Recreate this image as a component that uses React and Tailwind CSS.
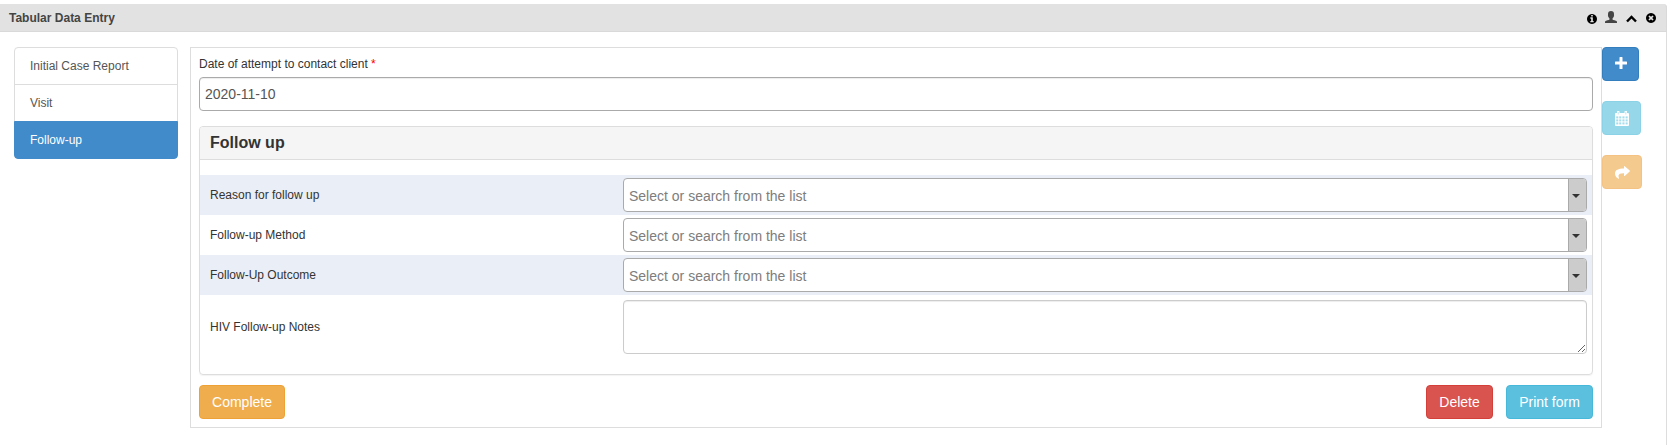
import React from "react";

const disc =
  "q0 209-103 385.5t-279.5 279.5-385.5 103-385.5-103-279.5-279.5-103-385.5 103-385.5 279.5-279.5 385.5-103 385.5 103 279.5 279.5 103 385.5z";

function InfoIcon() {
  return (
    <svg viewBox="128 128 1536 1536" className="w-[10px] h-[10px]">
      <path
        fill="#000"
        d={
          "M1152 1376v-160q0-14-9-23t-23-9h-96v-512q0-14-9-23t-23-9h-320q-14 0-23 9t-9 23v160q0 14 9 23t23 9h96v320h-96q-14 0-23 9t-9 23v160q0 14 9 23t23 9h448q14 0 23-9t9-23zm-128-896v-160q0-14-9-23t-23-9h-192q-14 0-23 9t-9 23v160q0 14 9 23t23 9h192q14 0 23-9t9-23zm640 416" +
          disc
        }
      />
    </svg>
  );
}

function UserIcon() {
  return (
    <svg viewBox="0 0 12 12" className="w-3 h-3">
      <path
        fill="#444"
        d="M6 0C4 0 3 1.200 3 3c0 .5 0 .8.100 1.200-.3.300-.2 1.100.300 1.500.2.700.6 1.200 1.100 1.700v1C4.200 9 .8 9.200.200 10.200 0 10.700 0 11.300 0 12h12c0-.7 0-1.300-.2-1.800-.6-1-4-1.200-4.300-1.800v-1c.5-.5.9-1 1.100-1.700.5-.4.6-1.200.3-1.500C9 3.800 9 3.500 9 3 9 1.200 8 0 6 0z"
      />
    </svg>
  );
}

function ChevronUpIcon() {
  return (
    <svg viewBox="0 0 11 8" className="w-[11px] h-2">
      <path fill="none" stroke="#000" strokeWidth="2.400" d="M1 6.500L5.500 2L10 6.500" />
    </svg>
  );
}

function CloseIcon() {
  return (
    <svg viewBox="128 128 1536 1536" className="w-[10px] h-[10px]">
      <path
        fill="#000"
        d={
          "M1277 1122q0-26-19-45l-181-181 181-181q19-19 19-45 0-27-19-46l-90-90q-19-19-46-19-26 0-45 19l-181 181-181-181q-19-19-45-19-27 0-46 19l-90 90q-19 19-19 46 0 26 19 45l181 181-181 181q-19 19-19 45 0 27 19 46l90 90q19 19 46 19 26 0 45-19l181-181 181 181q19 19 45 19 27 0 46-19l90-90q19-19 19-46zm387-226" +
          disc
        }
      />
    </svg>
  );
}

function PlusIcon() {
  return (
    <svg viewBox="0 0 12 12" className="w-3 h-3">
      <path
        fill="#fff"
        d="M5 0h2q.5 0 .5.500v4h4q.5 0 .5.500v2q0 .5-.5.500h-4v4q0 .5-.5.500H5q-.5 0-.5-.5v-4h-4Q0 7.500 0 7V5q0-.5.500-.5h4v-4Q4.500 0 5 0z"
      />
    </svg>
  );
}

function CalendarIcon() {
  const columns = [1.2, 4.2, 7.4, 10.6];
  const rows = [5.4, 8.4, 11.4];
  return (
    <svg viewBox="0 0 14 15" className="w-[14px] h-[15px]">
      <path
        fill="#fff"
        d="M2 .5q0-.5.500-.5h1.500q.5 0 .5.500V2h5V.500q0-.5.500-.5h1.500q.5 0 .5.500V2h1q1 0 1 1v11q0 1-1 1H1q-1 0-1-1V3q0-1 1-1h1z"
      />
      {rows.map((y) =>
        columns.map((x) => (
          <rect key={`${x}-${y}`} x={x} y={y} width="2.100" height="2" fill="#96d7ea" opacity="0.850" />
        ))
      )}
      <path stroke="#96d7ea" strokeWidth="0.600" d="M3.200 1v2.500M10.800 1v2.500" />
    </svg>
  );
}

function ShareIcon() {
  return (
    <svg viewBox="0 0 15 13" className="w-[15px] h-[13px]">
      <path
        fill="#fff"
        d="M9 .4Q9-.3 9.700.200L14.700 4.500Q15.100 5 14.700 5.500L9.700 9.900Q9 10.400 9 9.700V7.300C5.500 7.200 3.700 8 3.500 9.800c0 .8.200 1.600.5 2.300.2.700-.4.800-.8.400C1.300 11.500 0 9.700 0 7.700 0 4 3.400 2.600 9 2.600z"
      />
    </svg>
  );
}

function TabItem({ label, className }) {
  return <a className={`block h-[38px] border px-[15px] pt-[10px] leading-4 ${className}`}>{label}</a>;
}

function SelectBox() {
  return (
    <div className="flex h-[34px] w-[964px] overflow-hidden rounded border border-[#aaa] bg-white text-sm text-[#7d7d7d]">
      <span className="flex-1 pl-[5px] pt-[7px] leading-5">Select or search from the list</span>
      <span className="flex w-[18px] items-center justify-center border-l border-[#aaa] bg-[#ccc] pr-[3px] pt-px">
        <svg viewBox="0 0 8 4" className="h-1 w-2 shrink-0">
          <path d="M0 0h8L4 4z" fill="#333" />
        </svg>
      </span>
    </div>
  );
}

function FieldRow({ label, shaded }) {
  return (
    <div className={`flex h-10 items-center justify-between pl-[10px] pr-[5px] ${shaded ? "bg-[#eaeef6]" : "bg-white"}`}>
      <span className="leading-4">{label}</span>
      <SelectBox />
    </div>
  );
}

const button = "flex h-[34px] items-center justify-center rounded border text-sm leading-5 text-white";

export default function App() {
  return (
    <div className="h-[445px] overflow-hidden bg-white pt-1 font-['Liberation_Sans',Arial,sans-serif] text-xs text-[#333]">
      <div className="flex h-[441px] w-[1667px] flex-col rounded-tr border-r border-[#ddd]">
        <header className="-mr-px flex h-7 shrink-0 items-center justify-between rounded-tr border-b border-r border-[#d9d9d9] bg-[#e2e2e2] pl-[9px] pr-[10px]">
          <h1 className="font-bold leading-4 text-[#444]">Tabular Data Entry</h1>
          <div className="flex items-center">
            <span className="mr-[8px] mt-[2px]"><InfoIcon /></span>
            <span className="mr-[9px] mt-[-2px]"><UserIcon /></span>
            <span className="mr-[9px] mt-[3px]"><ChevronUpIcon /></span>
            <span><CloseIcon /></span>
          </div>
        </header>

        <div className="flex items-start pl-[14px] pt-[15px]">
          <nav className="mr-3 w-[164px] text-[#555]">
            <TabItem label="Initial Case Report" className="rounded-t border-[#ddd]" />
            <TabItem label="Visit" className="-mt-px border-[#ddd]" />
            <TabItem label="Follow-up" className="-mt-px rounded-b border-[#428bca] bg-[#428bca] text-white" />
          </nav>

          <main className="h-[381px] w-[1412px] border border-[#ddd] px-2 pt-2">
            <label className="block h-[21px] leading-4">
              Date of attempt to contact client <span className="text-[#f00]">*</span>
            </label>
            <input
              type="text"
              defaultValue="2020-11-10"
              className="block h-[34px] w-full rounded border border-[#aaa] bg-white px-[5px] text-sm text-[#555] shadow-[inset_0_1px_1px_rgba(0,0,0,0.075)]"
            />

            <section className="mt-[15px] h-[249px] rounded border border-[#ddd] shadow-[0_1px_1px_rgba(0,0,0,0.05)]">
              <h2 className="h-[33px] rounded-t-[3px] border-b border-[#ddd] bg-[#f5f5f5] pl-[10px] pt-[6px] text-base font-bold leading-5">
                Follow up
              </h2>
              <div className="pt-[15px]">
                <FieldRow label="Reason for follow up" shaded />
                <FieldRow label="Follow-up Method" />
                <FieldRow label="Follow-Up Outcome" shaded />
                <div className="flex h-16 items-center justify-between pl-[10px] pr-[5px]">
                  <span className="leading-4">HIV Follow-up Notes</span>
                  <textarea className="block h-[54px] w-[964px] rounded border border-[#ccc] bg-white px-[5px] text-sm shadow-[inset_0_1px_1px_rgba(0,0,0,0.075)]" />
                </div>
              </div>
            </section>

            <div className="mt-[10px] flex">
              <button className={`${button} w-[86px] border-[#eea236] bg-[#f0ad4e]`}>Complete</button>
              <button className={`${button} ml-auto w-[67px] border-[#d43f3a] bg-[#d9534f]`}>Delete</button>
              <button className={`${button} ml-[13px] w-[87px] border-[#46b8da] bg-[#5bc0de]`}>Print form</button>
            </div>
          </main>

          <aside className="flex flex-col gap-5">
            <button className={`${button} w-[37px] border-[#357ebd] bg-[#428bca] pl-px pb-[2px]`}><PlusIcon /></button>
            <button className={`${button} w-[39px] border-[#8bd2e7] bg-[#96d7ea]`}><CalendarIcon /></button>
            <button className={`${button} w-10 border-[#f4c283] bg-[#f5ca8e]`}><ShareIcon /></button>
          </aside>
        </div>
      </div>
    </div>
  );
}
